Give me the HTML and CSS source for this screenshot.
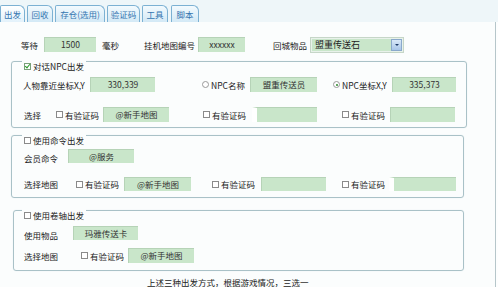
FILE: index.html
```html
<!DOCTYPE html>
<html>
<head>
<meta charset="utf-8">
<link rel="stylesheet" href="styles.css">
</head>
<body>
<div class="page">
  <div class="tabs">
    <div class="tab active w25">出发</div>
    <div class="tab w26 ml2">回收</div>
    <div class="tab w50 ml2">存仓(选用)</div>
    <div class="tab w33 ml2">验证码</div>
    <div class="tab w26 ml2">工具</div>
    <div class="tab w28 ml3">脚本</div>
  </div>
  <div class="main">
    <div class="row row1">
      <span class="lbl ml21 w23">等待</span>
      <span class="inp w52">1500</span>
      <span class="lbl ml6 w42">毫秒</span>
      <span class="lbl w54">挂机地图编号</span>
      <span class="inp w47">xxxxxx</span>
      <span class="lbl ml28 w38">回城物品</span>
      <span class="select w92"><span class="sel-text">盟重传送石</span><span class="sel-btn"><span class="arrow"></span></span></span>
    </div>

    <div class="group g1">
      <div class="legend"><span class="box checked"></span>对话NPC出发</div>
      <div class="row rA">
        <span class="lbl ml11 w67">人物靠近坐标X,Y</span>
        <span class="inp w65">330,339</span>
        <span class="lbl ml47 w48"><span class="radio"></span>NPC名称</span>
        <span class="inp w67">盟重传送员</span>
        <span class="lbl ml16 w59"><span class="radio on"></span>NPC坐标X,Y</span>
        <span class="inp w64">335,373</span>
      </div>
      <div class="row rB">
        <span class="lbl ml12 w32">选择</span>
        <span class="lbl w47"><span class="box"></span>有验证码</span>
        <span class="inp w66">@新手地图</span>
        <span class="lbl ml34 w49"><span class="box"></span>有验证码</span>
        <span class="inp notch w65"></span>
        <span class="lbl ml25 w48"><span class="box"></span>有验证码</span>
        <span class="inp w65"></span>
      </div>
    </div>

    <div class="group g2">
      <div class="legend"><span class="box"></span>使用命令出发</div>
      <div class="row rC">
        <span class="lbl low ml12 w44">会员命令</span>
        <span class="inp w66">@服务</span>
      </div>
      <div class="row rD">
        <span class="lbl ml12 w52">选择地图</span>
        <span class="lbl w48"><span class="box"></span>有验证码</span>
        <span class="inp w67">@新手地图</span>
        <span class="lbl ml21 w49"><span class="box"></span>有验证码</span>
        <span class="inp w65"></span>
        <span class="lbl ml16 w47"><span class="box"></span>有验证码</span>
        <span class="inp notch w67"></span>
      </div>
    </div>

    <div class="group g3">
      <div class="legend"><span class="box"></span>使用卷轴出发</div>
      <div class="row rE">
        <span class="lbl low ml10 w49">使用物品</span>
        <span class="inp w65">玛雅传送卡</span>
      </div>
      <div class="row rF">
        <span class="lbl ml10 w57">选择地图</span>
        <span class="lbl w47"><span class="box"></span>有验证码</span>
        <span class="inp w66">@新手地图</span>
      </div>
    </div>

    <div class="note">上述三种出发方式，根据游戏情况，三选一</div>
  </div>
</div>
</body>
</html>
```

FILE: styles.css
```css
* { box-sizing: border-box; }
html, body { margin: 0; padding: 0; background: #fbfdfd; }
body {
  font-family: "Noto Sans CJK SC", "Noto Sans", sans-serif;
  font-size: 8.5px;
  color: #222;
}
.page { width: 498px; height: 287px; overflow: hidden; background: #fdfefe; }

.tabs {
  height: 22px;
  display: flex;
  align-items: flex-end;
  background: #eef6f9;
}
.tab {
  height: 17px;
  line-height: 16px;
  text-align: center;
  color: #3575b0;
  font-size: 8.5px;
  border: 1px solid #7cb1d3;
  border-bottom: none;
  border-radius: 2px 6px 0 0;
  background: linear-gradient(#f3fafe, #d3e9f6);
  white-space: nowrap;
}
.tab.active { background: linear-gradient(#ffffff, #e3f2fb); }

.main {
  width: 496px;
  height: 265px;
  border-right: 1px solid #b6c6ca;
  background: #fbfdfd;
  overflow: hidden;
  padding-top: 15px;
}

.row { display: flex; align-items: center; height: 15px; }
.lbl { white-space: nowrap; display: flex; align-items: center; line-height: 12px; }
.lbl.low { padding-top: 3px; }
.inp {
  height: 15px;
  background: #c9e6ca;
  border-top: 1px solid #b6d3b7;
  border-left: 1px solid #b6d3b7;
  color: #333;
  text-align: center;
  line-height: 13px;
  white-space: nowrap;
  overflow: hidden;
}
.inp.notch { border-left: 5px solid #ffffff; }

.select {
  height: 14px;
  display: flex;
  background: #c9e6ca;
  border: 1px solid #e8f2ea;
  outline: 1px solid #c6d6c8;
}
.sel-text { flex: 1; padding-left: 3px; line-height: 12px; font-size: 9px; }
.sel-btn {
  width: 11px;
  height: 12px;
  background: linear-gradient(#d9e8f7, #a9c6e8);
  border: 1px solid #8aa9cc;
  display: flex;
  align-items: center;
  justify-content: center;
}
.arrow {
  width: 0; height: 0;
  border-left: 2px solid transparent;
  border-right: 2px solid transparent;
  border-top: 2px solid #1d3b66;
}

.box {
  display: inline-block;
  width: 7px; height: 7px;
  border: 1px solid #8a8a8a;
  background: #fff;
  margin-right: 2px;
  position: relative;
  flex: none;
}
.box.checked { border-color: #7aa07a; }
.box.checked::after {
  content: "";
  position: absolute;
  left: 1px; top: -1px;
  width: 2px; height: 4px;
  border-right: 1.5px solid #2a9a2a;
  border-bottom: 1.5px solid #2a9a2a;
  transform: rotate(40deg);
}
.radio {
  display: inline-block;
  width: 7px; height: 7px;
  border: 1px solid #999;
  border-radius: 50%;
  background: #fff;
  margin-right: 2px;
  position: relative;
  flex: none;
}
.radio.on::after {
  content: "";
  position: absolute;
  left: 1.5px; top: 1.5px;
  width: 2px; height: 2px;
  border-radius: 50%;
  background: #2d8a2d;
}

.group {
  position: relative;
  border: 1px solid #a9c1c7;
  border-radius: 3px;
  box-shadow: 0 0 1px #d5e2e5;
}
.legend {
  position: absolute;
  top: -2px;
  left: 10px;
  padding: 0 2px;
  background: #fbfdfd;
  display: flex;
  align-items: center;
  height: 12px;
  line-height: 12px;
  white-space: nowrap;
}
.g1 { margin: 9px 0 0 11px; width: 456px; height: 67px; padding-top: 15px; }
.g1 .rB { margin-top: 15px; }
.g2 { margin: 7px 0 0 11px; width: 453px; height: 63px; padding-top: 13px; }
.g2 .rC { height: 14px; }
.g2 .rD { margin-top: 14px; height: 14px; }
.g2 .inp { height: 14px; }
.g3 { margin: 12px 0 0 13px; width: 451px; height: 61px; padding-top: 15px; }
.g3 .rE { height: 14px; }
.g3 .rE .inp { height: 14px; }
.g3 .rF { margin-top: 8px; }
.g3 .legend { left: 8px; }

.note { margin-top: 6px; padding-left: 147px; line-height: 10px; white-space: nowrap; }

.ml2 { margin-left: 2px; } .ml3 { margin-left: 3px; } .ml6 { margin-left: 6px; }
.ml10 { margin-left: 10px; } .ml11 { margin-left: 11px; } .ml12 { margin-left: 12px; }
.ml16 { margin-left: 16px; } .ml21 { margin-left: 21px; } .ml25 { margin-left: 25px; }
.ml28 { margin-left: 28px; } .ml34 { margin-left: 34px; } .ml47 { margin-left: 47px; }

.w23 { width: 23px; } .w25 { width: 25px; } .w26 { width: 26px; } .w28 { width: 28px; }
.w32 { width: 32px; } .w33 { width: 33px; } .w38 { width: 38px; } .w42 { width: 42px; }
.w44 { width: 44px; } .w47 { width: 47px; } .w48 { width: 48px; } .w49 { width: 49px; }
.w50 { width: 50px; } .w52 { width: 52px; } .w54 { width: 54px; } .w57 { width: 57px; }
.w59 { width: 59px; } .w64 { width: 64px; } .w65 { width: 65px; } .w66 { width: 66px; }
.w67 { width: 67px; } .w92 { width: 92px; }
```
